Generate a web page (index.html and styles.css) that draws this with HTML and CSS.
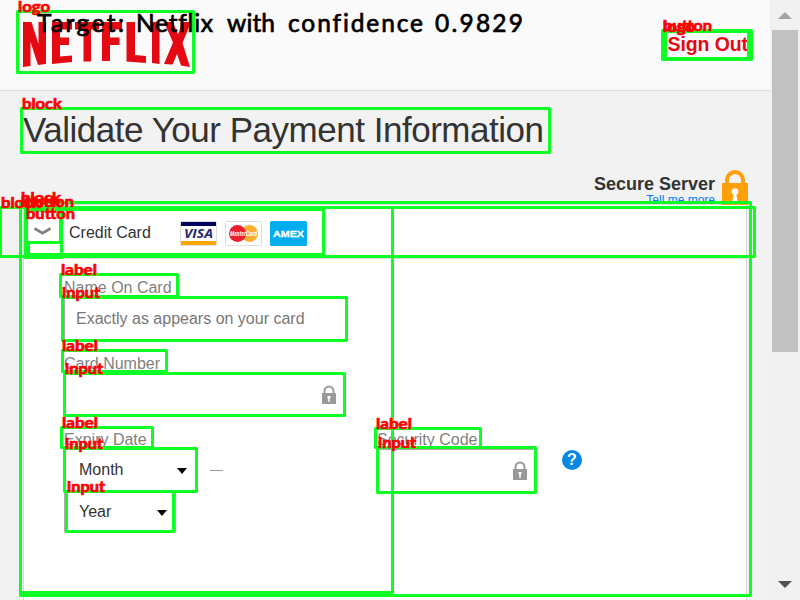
FILE: index.html
```html
<!DOCTYPE html>
<html lang="en">
<head>
<meta charset="utf-8">
<title>Validate Your Payment Information</title>
<link rel="stylesheet" href="styles.css">
</head>
<body>
<div class="window">
  <div class="page">
    <header class="header">
      <svg class="logo" viewBox="0 0 168 46" role="img" aria-label="Netflix">
        <g fill="#e50914">
          <path d="M0 0H8.500L15.500 22V0H23V42L15 43L7.500 20V44L0 45Z"/>
          <path d="M29 0H49V7.500H37V15.500H46V23H37V34.500L49 33.500V40L29 42Z"/>
          <path d="M52 0H76V7.500H68V39.500H60.500V7.500H52Z"/>
          <path d="M79 0H99V7.500H87V15.500H96.500V23H87V39H79Z"/>
          <path d="M103.500 0H112V33L123 34V41L103.500 39.500Z"/>
          <path d="M129 0H136.500V42L129 41Z"/>
          <path d="M141 0H150L155 12.500L159.500 0H168L159.500 21L167 45L158 43.500L154 32L149.500 42.500L141 42L150 20.500Z"/>
        </g>
      </svg>
      <a class="signout">Sign Out</a>
    </header>
    <main class="main">
      <h1 class="title">Validate Your Payment Information</h1>
      <div class="secure">
        <div class="secure-text"><strong>Secure Server</strong><a>Tell me more</a></div>
        <svg class="big-lock" viewBox="0 0 26 36"><path d="M5 14V11a8 8 0 0 1 16 0V14" fill="none" stroke="#ffa00a" stroke-width="4"/><path d="M0 14H26V36H0Z" fill="#ffa00a"/><circle cx="13" cy="22.500" r="3.300" fill="#fff"/><path d="M12 23H14L15.500 32H10.500Z" fill="#fff"/></svg>
      </div>
      <section class="card">
        <div class="card-head">
          <svg class="chevron" viewBox="0 0 17 9"><path d="M.5 1.500L8.500 6.200L16.500 1.500" fill="none" stroke="#808080" stroke-width="2.800"/></svg>
          <span class="method">Credit Card</span>
          <div class="brands">
            <svg viewBox="0 0 37 25"><rect x=".5" y=".5" width="36" height="24" rx="1" fill="#fff" stroke="#ddd"/><path fill="#00005c" d="M1 1H36V5H1Z"/><path fill="#ffa800" d="M1 20H36V24H1Z"/><text class="visa" x="4" y="17.300" textLength="29" lengthAdjust="spacingAndGlyphs">VISA</text></svg>
            <svg viewBox="0 0 37 25"><rect x=".5" y=".5" width="36" height="24" rx="1" fill="#fff" stroke="#ddd"/><circle cx="24.500" cy="12.500" r="8.500" fill="#fbb034"/><circle cx="12.500" cy="12.500" r="8.500" fill="#ed1c2e"/><text class="mc" x="5" y="15" textLength="27" lengthAdjust="spacingAndGlyphs">MasterCard</text></svg>
            <svg viewBox="0 0 37 25"><rect width="37" height="25" rx="1.500" fill="#00aeef"/><text class="amex" x="3" y="15.700" textLength="31" lengthAdjust="spacingAndGlyphs">AMEX</text></svg>
          </div>
        </div>
        <form class="form">
          <label class="caption">Name On Card</label>
          <div class="field name">Exactly as appears on your card</div>
          <label class="caption number-label">Card Number</label>
          <div class="field number"><svg class="lock" viewBox="0 0 14 20"><path d="M2.500 8V6a4.500 4.500 0 0 1 9 0V8" fill="none" stroke="#999" stroke-width="2"/><path d="M0 8H14V19H0Z" fill="#999"/><path d="M5.500 11H8.500V13.500H7.700V17H6.300V13.500H5.500Z" fill="#fff"/></svg></div>
          <div class="row">
            <div class="expiry">
              <label class="caption">Expiry Date</label>
              <div class="month-row"><div class="field select month">Month<i></i></div><span class="dash"></span></div>
              <div class="field select year">Year<i></i></div>
            </div>
            <div class="security">
              <label class="caption">Security Code</label>
              <div class="code-row">
                <div class="field code"><svg class="lock" viewBox="0 0 14 20"><path d="M2.500 8V6a4.500 4.500 0 0 1 9 0V8" fill="none" stroke="#999" stroke-width="2"/><path d="M0 8H14V19H0Z" fill="#999"/><path d="M5.500 11H8.500V13.500H7.700V17H6.300V13.500H5.500Z" fill="#fff"/></svg></div>
                <span class="help">?</span>
              </div>
            </div>
          </div>
        </form>
      </section>
    </main>
  </div>
  <div class="scrollbar"><span class="up"></span><span class="thumb"></span><span class="down"></span></div>
</div>
<svg class="overlay" viewBox="0 0 800 600">
  <g class="boxes">
    <rect x="17.500" y="11.500" width="176" height="61"/>
    <rect x="662.500" y="30.500" width="89" height="29"/>
    <rect x="665.500" y="31.500" width="83" height="27"/>
    <rect x="21.500" y="108.500" width="528" height="44"/>
    <rect x="20.500" y="202.500" width="730" height="393"/>
    <rect x="20.500" y="207.500" width="372" height="385"/>
    <rect x=".5" y="207.500" width="754" height="49"/>
    <rect x="25.500" y="209.500" width="298" height="45"/>
    <rect x="25.500" y="209.500" width="36" height="48"/>
    <rect x="26.500" y="210.500" width="34" height="32"/>
    <rect x="28.500" y="242.500" width="33" height="14"/>
    <rect x="60.500" y="274.500" width="117" height="22"/>
    <rect x="62.500" y="297.500" width="284" height="43"/>
    <rect x="62.500" y="350.500" width="104" height="21"/>
    <rect x="64.500" y="373.500" width="280" height="42"/>
    <rect x="61.500" y="427.500" width="91" height="20"/>
    <rect x="64.500" y="448.500" width="132" height="43"/>
    <rect x="66.500" y="491.500" width="107" height="40"/>
    <rect x="375.500" y="428.500" width="105" height="19"/>
    <rect x="377.500" y="447.500" width="158" height="45"/>
  </g>
  <g class="tags">
    <text x="18" y="12" textLength="32" lengthAdjust="spacingAndGlyphs">logo</text>
    <text x="663" y="32" textLength="32" lengthAdjust="spacingAndGlyphs">logo</text>
    <text x="663" y="31" textLength="49" lengthAdjust="spacingAndGlyphs">button</text>
    <text x="22" y="109" textLength="40" lengthAdjust="spacingAndGlyphs">block</text>
    <text x="1" y="208" textLength="40" lengthAdjust="spacingAndGlyphs">block</text>
    <text x="21" y="203" textLength="40" lengthAdjust="spacingAndGlyphs">block</text>
    <text x="21" y="207" textLength="40" lengthAdjust="spacingAndGlyphs">block</text>
    <text x="25" y="207" textLength="49" lengthAdjust="spacingAndGlyphs">button</text>
    <text x="26" y="219" textLength="49" lengthAdjust="spacingAndGlyphs">button</text>
    <text x="61" y="275" textLength="36" lengthAdjust="spacingAndGlyphs">label</text>
    <text x="62" y="298" textLength="38" lengthAdjust="spacingAndGlyphs">input</text>
    <text x="62" y="351" textLength="36" lengthAdjust="spacingAndGlyphs">label</text>
    <text x="65" y="374" textLength="38" lengthAdjust="spacingAndGlyphs">input</text>
    <text x="62" y="428" textLength="36" lengthAdjust="spacingAndGlyphs">label</text>
    <text x="65" y="449" textLength="38" lengthAdjust="spacingAndGlyphs">input</text>
    <text x="67" y="492" textLength="38" lengthAdjust="spacingAndGlyphs">input</text>
    <text x="376" y="429" textLength="36" lengthAdjust="spacingAndGlyphs">label</text>
    <text x="378" y="448" textLength="38" lengthAdjust="spacingAndGlyphs">input</text>
  </g>
  <g class="caption-line">
    <text x="37" y="32" textLength="87">Target:</text>
    <text x="136" y="32" textLength="77">Netflix</text>
    <text x="227" y="32" textLength="48">with</text>
    <text x="288" y="32" textLength="135">confidence</text>
    <text x="435" y="32" textLength="88">0.9829</text>
  </g>
</svg>
</body>
</html>
```

FILE: styles.css
```css
* { box-sizing: border-box; }
body { margin: 0; width: 800px; height: 600px; overflow: hidden; position: relative; background: #f2f2f2; color: #333; font: 16px "Liberation Sans", Arial, sans-serif; }
.window { display: flex; height: 600px; }
.page { width: 770px; height: 600px; overflow: hidden; }
.header { height: 91px; background: #fafafa; border-bottom: 1px solid #dcdcdc; display: flex; justify-content: space-between; align-items: flex-start; padding: 22px 22px 0 23px; }
.logo { width: 168px; height: 46px; }
.signout { color: #e50914; font-size: 19.500px; font-weight: bold; line-height: 22px; padding-top: 11px; letter-spacing: -.1px; }
.main { padding: 19px 23px 0; }
.title { margin: 0; font-size: 35px; font-weight: normal; line-height: 40px; white-space: nowrap; letter-spacing: -.48px; }
.secure { display: flex; justify-content: flex-end; height: 34px; margin: 20px -1px 0 0; gap: 7px; }
.secure-text { display: flex; flex-direction: column; align-items: flex-end; padding-top: 4px; }
.secure-text strong { font-size: 18px; line-height: 20px; }
.secure-text a { font-size: 12px; line-height: 13px; color: #0080ff; }
.big-lock { width: 26px; height: 36px; flex: none; margin-top: -1px; }
.card { height: 420px; background: #fff; border: 1px solid #d8d8dc; }
.card-head { height: 54px; border-bottom: 1px solid #dcdcdc; display: flex; align-items: center; padding: 2px 0 0 10px; }
.chevron { width: 17px; height: 9px; margin-top: -3px; }
.method { width: 111px; margin-left: 18px; line-height: 20px; }
.brands { display: flex; gap: 8px; margin-top: 1px; }
.brands svg { width: 37px; height: 25px; }
.visa { font: italic bold 13px "Open Sans", sans-serif; fill: #27276b; }
.mc { font: italic bold 6.500px "Liberation Sans", sans-serif; fill: #fff; }
.amex { font: bold 9.500px "Liberation Sans", sans-serif; fill: #fff; stroke: #fff; stroke-width: .3px; }
.form { padding: 20px 0 0 40px; }
.caption { display: block; height: 18px; line-height: 18px; color: #808080; }
.field { border: 1px solid #aaa; border-radius: 2px; background: #fff; display: flex; align-items: center; }
.name { width: 282px; height: 43px; color: #777; padding: 0 0 2px 11px; margin-top: 1px; }
.number-label { margin-top: 14px; }
.number { width: 280px; height: 43px; margin-top: 1px; justify-content: flex-end; padding: 0 7px 2px 0; }
.lock { width: 14px; height: 20px; }
.row { display: flex; margin-top: 14px; }
.expiry { width: 313px; }
.month-row { display: flex; align-items: center; gap: 14px; }
.select { padding: 0 9px 0 14px; justify-content: space-between; }
.select i { border: 5px solid transparent; border-top: 6px solid #000; border-bottom: 0; margin: 2px -1px 0 0; }
.month { width: 132px; height: 42px; }
.year { width: 112px; height: 42px; }
.dash { width: 13px; height: 1px; background: #999; }
.code-row { display: flex; align-items: center; gap: 25px; }
.code { width: 160px; height: 45px; justify-content: flex-end; padding: 0 9px 1px 0; }
.help { width: 20px; height: 20px; border-radius: 50%; background: #0788e5; color: #fff; font-weight: bold; font-size: 16px; line-height: 20px; text-align: center; margin-top: -23px; }
.scrollbar { width: 30px; background: #f1f1f1; display: flex; flex-direction: column; align-items: center; }
.up { border: 7px solid transparent; border-bottom-color: #a3a3a3; border-top: 0; margin-top: 12px; }
.thumb { width: 26px; height: 322px; background: #c1c1c1; margin: 11px 2px 0; }
.down { border: 7px solid transparent; border-top-color: #505050; border-bottom: 0; margin-top: 229px; }
.overlay { position: absolute; left: 0; top: 0; width: 800px; height: 600px; }
.boxes { fill: none; stroke: #0dff25; stroke-width: 3px; stroke-linejoin: round; }
.tags { font: bold 15px Lato, sans-serif; fill: #f00; stroke: #f00; stroke-width: .7px; }
.caption-line { font: 24.500px Lato, sans-serif; fill: #000; stroke: #000; stroke-width: .7px; font-variant-ligatures: none; }
```
